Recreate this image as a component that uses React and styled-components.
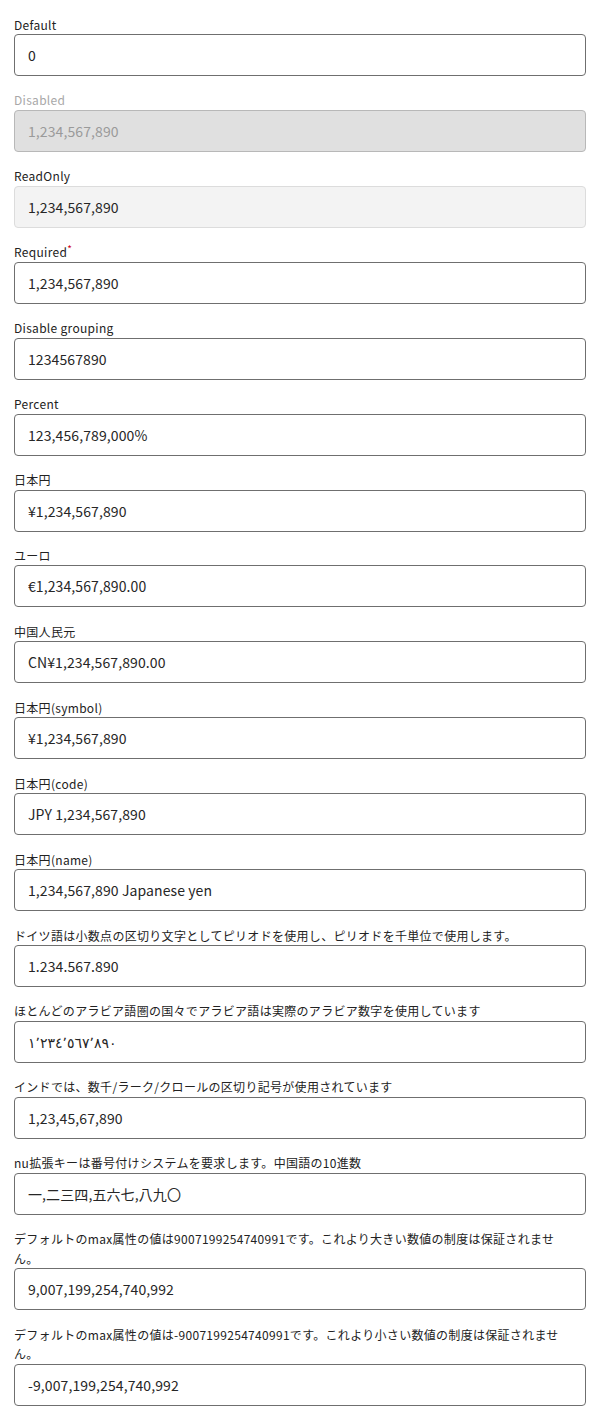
import React from "react";
import styled, { createGlobalStyle } from "styled-components";

const Global = createGlobalStyle`
  html, body { margin: 0; padding: 0; background: #fff; }
  body { font-family: "Noto Sans CJK JP", "Noto Sans", sans-serif; color: #222; }
`;

const Page = styled.div`
  display: flex;
  flex-direction: column;
  gap: 14.43px;
  padding: 14.5px 14px 14px;
`;

const Field = styled.div`
  display: flex;
  flex-direction: column;
`;

const Label = styled.label`
  font-size: 12px;
  letter-spacing: 0.3px;
  line-height: 19.5px;
  padding-right: 14px;
  color: ${(p) => (p.$disabled ? "#a8a8a8" : "#222")};
`;

const Star = styled.span`
  color: #d0021b;
  font-size: 10px;
  vertical-align: top;
  line-height: 14px;
`;

const Input = styled.input`
  box-sizing: border-box;
  width: 100%;
  height: 42px;
  margin: 0;
  padding: 0 13px;
  font-family: "Noto Sans CJK JP", "Noto Sans", "DejaVu Sans", sans-serif;
  font-size: 14px;
  letter-spacing: 0.1px;
  color: ${(p) => (p.disabled ? "#9a9a9a" : "#262626")};
  background: ${(p) => (p.disabled ? "#e0e0e0" : p.readOnly ? "#f3f3f3" : "#fff")};
  border: 1px solid ${(p) => (p.disabled ? "#b8b8b8" : p.readOnly ? "#dcdcdc" : "#6f6f6f")};
  border-radius: 4px;
  outline: none;
  -webkit-text-fill-color: ${(p) => (p.disabled ? "#9a9a9a" : "#262626")};
  opacity: 1;
`;

const fields = [
  { label: "Default", value: "0" },
  { label: "Disabled", value: "1,234,567,890", disabled: true },
  { label: "ReadOnly", value: "1,234,567,890", readOnly: true },
  { label: "Required", value: "1,234,567,890", required: true },
  { label: "Disable grouping", value: "1234567890" },
  { label: "Percent", value: "123,456,789,000%" },
  { label: "日本円", value: "¥1,234,567,890" },
  { label: "ユーロ", value: "€1,234,567,890.00" },
  { label: "中国人民元", value: "CN¥1,234,567,890.00" },
  { label: "日本円(symbol)", value: "¥1,234,567,890" },
  { label: "日本円(code)", value: "JPY 1,234,567,890" },
  { label: "日本円(name)", value: "1,234,567,890 Japanese yen" },
  { label: "ドイツ語は小数点の区切り文字としてピリオドを使用し、ピリオドを千単位で使用します。", value: "1.234.567.890" },
  { label: "ほとんどのアラビア語圏の国々でアラビア語は実際のアラビア数字を使用しています", value: "١٬٢٣٤٬٥٦٧٬٨٩٠" },
  { label: "インドでは、数千/ラーク/クロールの区切り記号が使用されています", value: "1,23,45,67,890" },
  { label: "nu拡張キーは番号付けシステムを要求します。中国語の10進数", value: "一,二三四,五六七,八九〇" },
  { label: "デフォルトのmax属性の値は9007199254740991です。これより大きい数値の制度は保証されません。", value: "9,007,199,254,740,992" },
  { label: "デフォルトのmax属性の値は-9007199254740991です。これより小さい数値の制度は保証されません。", value: "-9,007,199,254,740,992" },
];

export default function App() {
  return (
    <>
      <Global />
      <Page>
        {fields.map((f, i) => (
          <Field key={i}>
            <Label $disabled={f.disabled}>
              {f.label}
              {f.required && <Star>*</Star>}
            </Label>
            <Input
              type="text"
              defaultValue={f.value}
              disabled={f.disabled}
              readOnly={f.readOnly}
            />
          </Field>
        ))}
      </Page>
    </>
  );
}
